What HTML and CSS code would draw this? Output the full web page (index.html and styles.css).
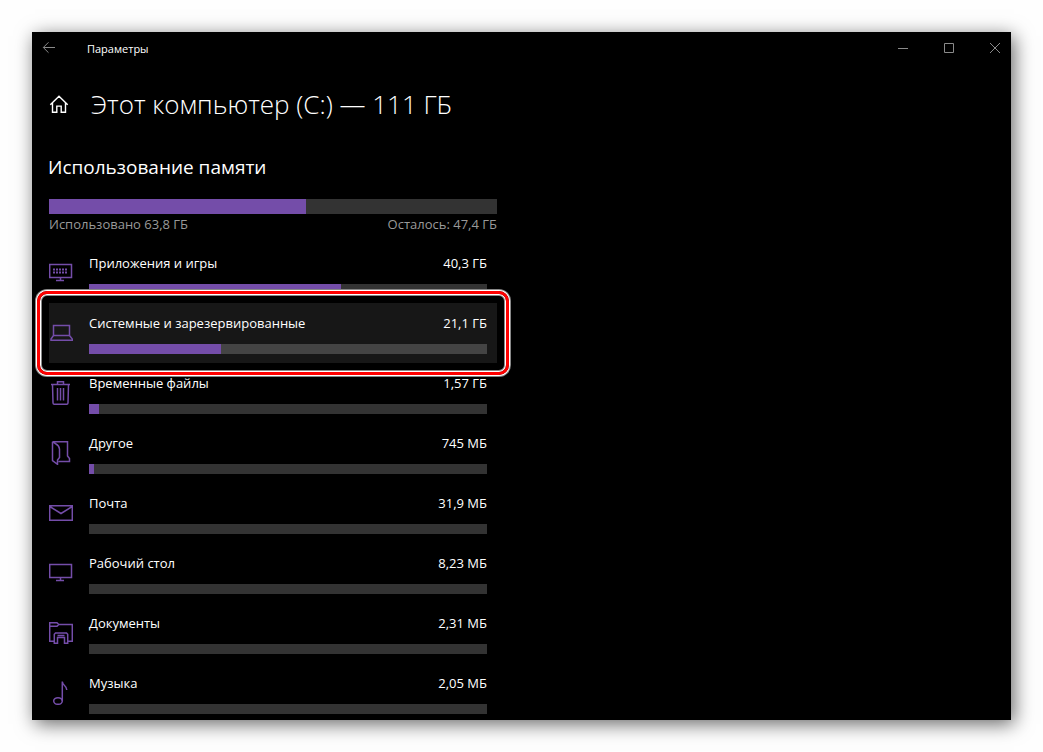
FILE: index.html
```html
<!DOCTYPE html>
<html lang="ru">
<head>
  <meta charset="UTF-8">
  <meta name="viewport" content="width=device-width, initial-scale=1.0">
  <title>Параметры</title>
  <link rel="stylesheet" href="styles.css">
</head>
<body>

<div class="window">
  <header class="titlebar">
    <button class="back" aria-label="Назад">
      <svg width="14" height="12" viewBox="0 0 14 12"><path d="M13 5.500H1.500M6.500 .3L1.300 5.500l5.200 5.200"/></svg>
    </button>
    <span class="app-name">Параметры</span>
    <div class="controls">
      <button aria-label="Свернуть"><svg width="12" height="12" viewBox="0 0 12 12"><path d="M1 6.500H11"/></svg></button>
      <button aria-label="Развернуть"><svg width="12" height="12" viewBox="0 0 12 12"><path d="M1.500 1.500h9v9h-9z"/></svg></button>
      <button aria-label="Закрыть"><svg width="12" height="12" viewBox="0 0 12 12"><path d="M1 1l10 10M11 1L1 11"/></svg></button>
    </div>
  </header>

  <main class="content">
    <div class="heading">
      <a class="home" href="#" aria-label="Главная">
        <svg width="20" height="20" viewBox="0 0 20 20"><path d="M1.300 10.800L10 2.300l8.700 8.500M3.500 9v9.300h4.300v-6.200h4.400v6.200h4.300V9"/></svg>
      </a>
      <h1>Этот компьютер (C:) — 111 ГБ</h1>
    </div>

    <h2>Использование памяти</h2>

    <section class="storage">
      <div class="total-bar"><div class="fill" style="width: 57.4%"></div></div>
      <div class="total-info">
        <span>Использовано 63,8 ГБ</span>
        <span>Осталось: 47,4 ГБ</span>
      </div>

      <nav class="list">
        <a class="item" href="#">
          <svg class="icon" viewBox="0 0 24 24"><path d="M.7 3.500h21.800v13H.7zM11.500 16.500v3M7 19.500h8"/><path class="keys" d="M4 8.500h14M4 11.500h14"/></svg>
          <div class="info">
            <div class="label"><span>Приложения и игры</span><span>40,3 ГБ</span></div>
            <div class="bar"><div class="fill" style="width: 63.3%"></div></div>
          </div>
        </a>
        <a class="item selected" href="#">
          <svg class="icon" viewBox="0 0 24 24"><path d="M4.500 4.500h16v10h-16zM4.500 14.500l-2.500 3.500v1.300h21.300V18l-2.800-3.500"/></svg>
          <div class="info">
            <div class="label"><span>Системные и зарезервированные</span><span>21,1 ГБ</span></div>
            <div class="bar"><div class="fill" style="width: 33.2%"></div></div>
          </div>
        </a>
        <a class="item" href="#">
          <svg class="icon" viewBox="0 0 24 24"><path d="M2 3.500h19M8.500 3.500v-2.800h6v2.800M3.500 3.500l.5 18.200q0 1.600 1.500 1.600h12q1.500 0 1.500-1.600l.5-18.200M8.500 7v12.500M11.500 7v12.500M14.500 7v12.500"/></svg>
          <div class="info">
            <div class="label"><span>Временные файлы</span><span>1,57 ГБ</span></div>
            <div class="bar"><div class="fill" style="width: 2.5%"></div></div>
          </div>
        </a>
        <a class="item" href="#">
          <svg class="icon" viewBox="0 0 24 24"><path d="M3.500 .7h15v14.300l2 2.500v3H9.500M3.500 .7v19L8.500 23.300v-4.300l2-2.500V8q-.5-3.500-3.500-5L4 .8"/></svg>
          <div class="info">
            <div class="label"><span>Другое</span><span>745 МБ</span></div>
            <div class="bar"><div class="fill" style="width: 1.2%"></div></div>
          </div>
        </a>
        <a class="item" href="#">
          <svg class="icon" viewBox="0 0 24 24"><path d="M.7 4.700h22.600v14.600H.7zM.7 5.500L12 12.500l11.300-7"/></svg>
          <div class="info">
            <div class="label"><span>Почта</span><span>31,9 МБ</span></div>
            <div class="bar"></div>
          </div>
        </a>
        <a class="item" href="#">
          <svg class="icon" viewBox="0 0 24 24"><path d="M.7 3.500h21.800v13H.7zM11.500 16.500v3M7 19.500h8"/></svg>
          <div class="info">
            <div class="label"><span>Рабочий стол</span><span>8,23 МБ</span></div>
            <div class="bar"></div>
          </div>
        </a>
        <a class="item" href="#">
          <svg class="icon" viewBox="0 0 24 24"><path d="M5.500 20.300H.7V1.700h7.300l1.700 1.800h13.600v16.800h-4.800M.7 5.300h7.300l1.700-1.800M5.300 22.300v-9l1.200-1.300h11l1.200 1.300v9h-3.200v-5.800h-7v5.800zM8.500 14.500h7"/></svg>
          <div class="info">
            <div class="label"><span>Документы</span><span>2,31 МБ</span></div>
            <div class="bar"></div>
          </div>
        </a>
        <a class="item" href="#">
          <svg class="icon" viewBox="0 0 24 24"><ellipse cx="9" cy="20" rx="4.300" ry="3.300"/><path d="M13.300 20V.5q.3 2.500 2.200 4t2.300 4.500"/></svg>
          <div class="info">
            <div class="label"><span>Музыка</span><span>2,05 МБ</span></div>
            <div class="bar"></div>
          </div>
        </a>
      </nav>
    </section>
  </main>
</div>

</body>
</html>
```
FILE: styles.css
```css
* {
  box-sizing: border-box;
}
body {
  margin: 0;
  padding: 32px;
  height: 100vh;
  background-color: #fefefe;
  font-family: "Open Sans", "Noto Sans", sans-serif;
  font-size: 13px;
  color: white;
}
button {
  display: flex;
  align-items: center;
  justify-content: center;
  width: 32px;
  height: 32px;
  padding: 0;
  border: none;
  background: none;
  cursor: pointer;
}
svg {
  fill: none;
  stroke: #8a8a8a;
}
a {
  color: inherit;
  text-decoration: none;
}
.window {
  height: 100%;
  overflow: hidden;
  background-color: black;
  box-shadow: 3px 4px 18px rgba(0, 0, 0, 0.6);
}
.titlebar {
  display: flex;
  align-items: center;
  height: 32px;
}
.back {
  width: 34px;
}
.app-name {
  margin-left: 21px;
  font-size: 11px;
}
.controls {
  display: flex;
  gap: 14px;
  margin-left: auto;
}
.content {
  padding: 16px;
}
.heading {
  display: flex;
  align-items: center;
  gap: 22px;
  height: 48px;
}
.home {
  display: flex;
  margin-left: 1px;
}
.home svg {
  stroke: white;
  stroke-width: 1.4;
}
h1 {
  margin: 0;
  font-size: 26px;
  font-weight: 300;
  white-space: nowrap;
}
h2 {
  margin: 23px 0 16px;
  font-size: 19px;
  font-weight: 400;
  line-height: 32px;
}
.storage {
  max-width: 449px;
  padding-left: 1px;
}
.total-bar {
  height: 15px;
  background-color: #333;
}
.fill {
  height: 100%;
  background-color: #744da9;
}
.total-info {
  display: flex;
  justify-content: space-between;
  margin-bottom: 9px;
  line-height: 20px;
  color: #999;
}
.item {
  display: flex;
  align-items: center;
  gap: 16px;
  position: relative;
  height: 60px;
  padding-right: 10px;
}
.icon {
  flex: none;
  width: 24px;
  height: 24px;
  stroke: #744da9;
  stroke-width: 1.5;
}
.keys {
  stroke-width: 2;
  stroke-dasharray: 2 1;
}
.info {
  flex: 1;
}
.label {
  display: flex;
  justify-content: space-between;
  margin-bottom: 11px;
  line-height: 20px;
}
.bar {
  height: 10px;
  background-color: #333;
}
.selected {
  background-color: #171717;
}
.selected .bar {
  background-color: #444;
}
/* red frame around the selected row */
.selected::after {
  content: "";
  position: absolute;
  z-index: 1;
  inset: -12px;
  border: 3px solid red;
  border-radius: 10px;
  box-shadow: 0 0 0 1px white, 0 0 0 2px #888, inset 0 0 0 1px white, inset 0 0 0 2px #888;
}
```
